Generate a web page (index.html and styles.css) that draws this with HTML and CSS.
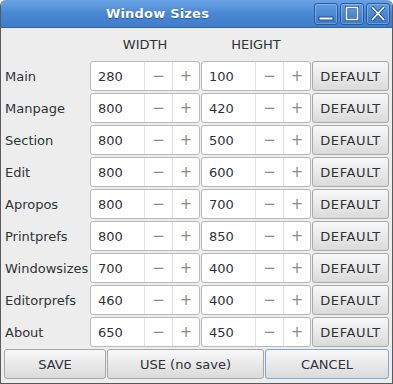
FILE: index.html
```html
<!DOCTYPE html>
<html lang="en">
<head>
    <meta charset="UTF-8">
    <title>Window Sizes</title>
    <link rel="stylesheet" href="styles.css">
</head>
<body>
    <div class="window">
        <div class="titlebar">
            <div class="title">Window Sizes</div>
            <div class="wm-buttons">
                <div class="wm-btn">
                    <svg width="24" height="22" viewBox="0 0 24 22"><rect x="5" y="14" width="14" height="3" fill="#fff" stroke="#1e4f8f" stroke-width="1"/></svg>
                </div>
                <div class="wm-btn">
                    <svg width="24" height="22" viewBox="0 0 24 22"><rect x="6.5" y="4.5" width="11" height="12" fill="none" stroke="#1e4f8f" stroke-width="3"/><rect x="6.5" y="4.5" width="11" height="12" fill="none" stroke="#fff" stroke-width="1.6"/></svg>
                </div>
                <div class="wm-btn">
                    <svg width="24" height="22" viewBox="0 0 24 22"><path d="M6 4 L18 17 M18 4 L6 17" stroke="#1e4f8f" stroke-width="3.4"/><path d="M6 4 L18 17 M18 4 L6 17" stroke="#fff" stroke-width="1.8"/></svg>
                </div>
            </div>
        </div>

        <div class="content">
            <div class="grid">
                <div></div>
                <div class="head">WIDTH</div>
                <div class="head">HEIGHT</div>
                <div></div>

                <div class="label">Main</div>
                <div class="spin"><span class="val">280</span><span class="op">&minus;</span><span class="op">+</span></div>
                <div class="spin"><span class="val">100</span><span class="op">&minus;</span><span class="op">+</span></div>
                <div class="button">DEFAULT</div>

                <div class="label">Manpage</div>
                <div class="spin"><span class="val">800</span><span class="op">&minus;</span><span class="op">+</span></div>
                <div class="spin"><span class="val">420</span><span class="op">&minus;</span><span class="op">+</span></div>
                <div class="button">DEFAULT</div>

                <div class="label">Section</div>
                <div class="spin"><span class="val">800</span><span class="op">&minus;</span><span class="op">+</span></div>
                <div class="spin"><span class="val">500</span><span class="op">&minus;</span><span class="op">+</span></div>
                <div class="button">DEFAULT</div>

                <div class="label">Edit</div>
                <div class="spin"><span class="val">800</span><span class="op">&minus;</span><span class="op">+</span></div>
                <div class="spin"><span class="val">600</span><span class="op">&minus;</span><span class="op">+</span></div>
                <div class="button">DEFAULT</div>

                <div class="label">Apropos</div>
                <div class="spin"><span class="val">800</span><span class="op">&minus;</span><span class="op">+</span></div>
                <div class="spin"><span class="val">700</span><span class="op">&minus;</span><span class="op">+</span></div>
                <div class="button">DEFAULT</div>

                <div class="label">Printprefs</div>
                <div class="spin"><span class="val">800</span><span class="op">&minus;</span><span class="op">+</span></div>
                <div class="spin"><span class="val">850</span><span class="op">&minus;</span><span class="op">+</span></div>
                <div class="button">DEFAULT</div>

                <div class="label">Windowsizes</div>
                <div class="spin"><span class="val">700</span><span class="op">&minus;</span><span class="op">+</span></div>
                <div class="spin"><span class="val">400</span><span class="op">&minus;</span><span class="op">+</span></div>
                <div class="button">DEFAULT</div>

                <div class="label">Editorprefs</div>
                <div class="spin"><span class="val">460</span><span class="op">&minus;</span><span class="op">+</span></div>
                <div class="spin"><span class="val">400</span><span class="op">&minus;</span><span class="op">+</span></div>
                <div class="button">DEFAULT</div>

                <div class="label">About</div>
                <div class="spin"><span class="val">650</span><span class="op">&minus;</span><span class="op">+</span></div>
                <div class="spin"><span class="val">450</span><span class="op">&minus;</span><span class="op">+</span></div>
                <div class="button">DEFAULT</div>
            </div>

            <div class="actions">
                <div class="button save">SAVE</div>
                <div class="button use">USE (no save)</div>
                <div class="button cancel">CANCEL</div>
            </div>
        </div>
    </div>
</body>
</html>
```

FILE: styles.css
```css
body {
    margin: 0;
    font-family: "DejaVu Sans", sans-serif;
    font-size: 13px;
    color: #2e3436;
    background: #ffffff;
}
.window {
    width: 393px;
    height: 384px;
    box-sizing: border-box;
    border: 1px solid #5a5a5a;
    border-top: none;
    border-radius: 6px 6px 0 0;
    background: #ededed;
    overflow: hidden;
}
.titlebar {
    height: 28px;
    display: flex;
    align-items: center;
    position: relative;
    background: linear-gradient(#6aa3e4, #4a88d4 50%, #3f7ccb);
    border-bottom: 1px solid #2f64a8;
    box-sizing: border-box;
}
.title {
    flex: 1;
    text-align: center;
    padding-left: 2px;
    padding-right: 80px;
    color: #ffffff;
    font-weight: bold;
    font-size: 13px;
    letter-spacing: 0.2px;
    text-shadow: 0 1px 1px #2a5a9a;
}
.wm-buttons {
    position: absolute;
    right: 2px;
    top: 3px;
    display: flex;
    gap: 2px;
}
.wm-btn {
    width: 24px;
    height: 22px;
    box-sizing: border-box;
    border: 1px solid #2a5a98;
    border-radius: 3px;
    background: linear-gradient(#5f9ae0, #3c78c8);
    box-shadow: inset 0 0 0 1px rgba(255, 255, 255, 0.25);
    overflow: hidden;
}
.wm-btn svg {
    display: block;
    margin: -1px 0 0 -1px;
}
.content {
    padding: 0 3px 0 3px;
}
.grid {
    display: grid;
    grid-template-columns: 85px 110px 110px 77px;
    grid-template-rows: 31px;
    grid-auto-rows: 30px;
    column-gap: 1px;
    row-gap: 2px;
}
.head {
    display: flex;
    align-items: center;
    justify-content: center;
    padding-top: 1px;
}
.label {
    display: flex;
    align-items: center;
    padding-left: 1px;
}
.spin {
    display: grid;
    grid-template-columns: 1fr 28px 27px;
    background: #ffffff;
    border: 1px solid #b9b9b9;
    border-radius: 3px;
    box-sizing: border-box;
}
.spin .val {
    display: flex;
    align-items: center;
    padding-left: 7px;
}
.spin .op {
    display: flex;
    align-items: center;
    justify-content: center;
    border-left: 1px solid #e2e2e2;
    color: #8a8a8a;
    font-size: 15px;
}
.button {
    display: flex;
    align-items: center;
    justify-content: center;
    box-sizing: border-box;
    border: 1px solid #a8a8a8;
    border-radius: 3px;
    background: linear-gradient(#f8f8f8, #e6e6e6 60%, #dadada);
    color: #2e3436;
    letter-spacing: 0.6px;
}
.actions {
    display: grid;
    grid-template-columns: 102px 157px 124px;
    column-gap: 1px;
    height: 30px;
    margin-top: 2px;
}
.actions .button {
    letter-spacing: 0;
}
.cancel {
    border-color: #7fa6d6;
}
```
